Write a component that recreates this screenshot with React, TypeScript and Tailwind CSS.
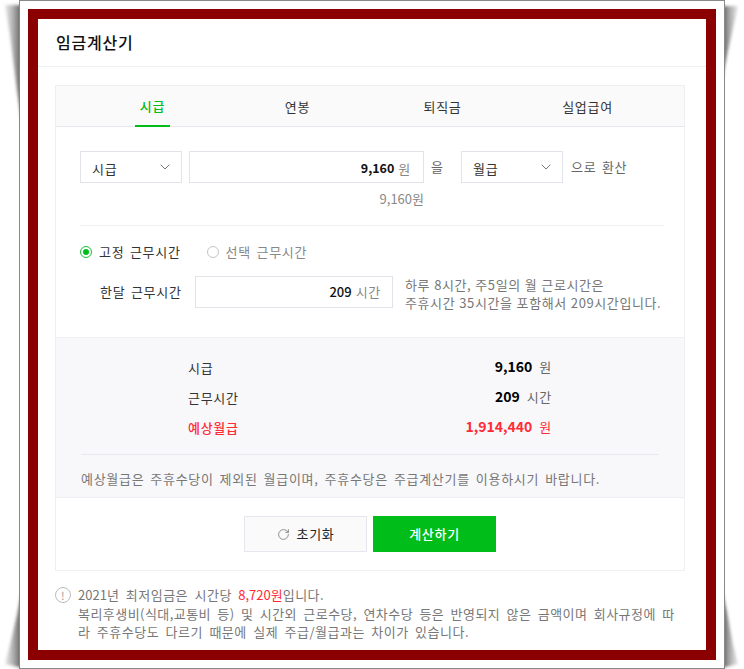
import React from 'react';
import { ChevronDown, RotateCw } from 'lucide-react';

const font = "font-['Noto_Sans_CJK_KR','Noto_Sans',sans-serif]";

const Select = ({ label, className }: { label: string; className: string }) => (
  <div className={`flex h-8 items-center justify-between border border-[#e2e3e8] pl-[11px] pr-2 text-[13px] text-[#333] ${className}`}>
    <span className="mt-[3px]">{label}</span>
    <ChevronDown size={16} strokeWidth={1.5} className="text-[#777]" />
  </div>
);

const Radio = ({ label, on }: { label: string; on?: boolean }) => (
  <label className={`flex items-center gap-[7px] text-[13px] ${on ? 'text-[#333]' : 'text-[#888]'}`}>
    <span className={`flex h-3 w-3 items-center justify-center rounded-full border ${on ? 'border-[#1cc13a]' : 'border-[#c4c4c4]'}`}>
      {on && <span className="h-1.5 w-1.5 rounded-full bg-[#00bd1a]" />}
    </span>
    {label}
  </label>
);

const SummaryRow = ({ label, value, unit, red }: { label: string; value: string; unit: string; red?: boolean }) => (
  <div className={`flex h-[30px] items-center justify-between text-[13px] ${red ? 'text-[#ff2b37]' : 'text-[#333]'}`}>
    <span className={red ? 'font-medium' : ''}>{label}</span>
    <span className="mb-1 flex items-baseline gap-[7px]">
      <b className={`text-[14px] font-bold tracking-normal ${red ? '' : 'text-black'}`}>{value}</b>
      <span className={`text-[13px] ${red ? '' : 'text-[#666]'}`}>{unit}</span>
    </span>
  </div>
);

export default function App() {
  return (
    <div className={`relative h-[669px] w-[744px] overflow-hidden bg-white tracking-[0.7px] [word-spacing:2px] ${font}`}>
      {/* curled page shadows */}
      <svg className="absolute inset-0" width="744" height="669">
        <defs>
          <linearGradient id="l" x1="0" x2="1" y1="0" y2="0">
            <stop offset="0" stopColor="#aaa" stopOpacity="0.3" />
            <stop offset="1" stopColor="#555" />
          </linearGradient>
          <linearGradient id="r" x1="1" x2="0" y1="0" y2="0">
            <stop offset="0" stopColor="#aaa" stopOpacity="0.3" />
            <stop offset="1" stopColor="#555" />
          </linearGradient>
          <filter id="soft" x="-30%" y="-10%" width="160%" height="120%">
            <feGaussianBlur stdDeviation="1.6" />
          </filter>
        </defs>
        <g filter="url(#soft)">
          <polygon points="5,5 22,5 22,125 17,90 10,35" fill="url(#l)" />
          <polygon points="5,664 22,668 22,590 17,615 10,645" fill="url(#l)" />
          <polygon points="738,6 722,6 722,80 727,55 733,28" fill="url(#r)" />
          <polygon points="738,664 722,668 722,590 727,612 733,645" fill="url(#r)" />
        </g>
      </svg>

      <div className="relative ml-[19px] h-[669px] w-[706px] border border-[#888] bg-white p-2">
        <div className="h-[651px] border-[10px] border-[#8b0000] bg-white">
          <h1 className="flex h-[48px] items-center border-b border-[#eeeff2] pb-[2px] pl-[18px] text-base font-medium tracking-[0.8px] text-[#111]">임금계산기</h1>

          <div className="ml-[17px] mt-[18px] w-[630px] border border-[#eeeff2]">
            <div className="flex h-[41px] border-b border-[#e6e7ec] bg-[#fafafa] px-[24px] text-[13px] text-[#333]">
              {['시급', '연봉', '퇴직금', '실업급여'].map((t, i) => (
                <div key={t} className="flex flex-1 justify-center">
                  <span className={`flex h-[41px] items-center px-[5px] ${i === 0 ? 'border-b-2 border-[#00bd1a] font-medium text-[#00bd1a]' : ''}`}>{t}</span>
                </div>
              ))}
            </div>

            <div className="px-6 pt-6">
              <div className="flex items-center text-[13px] text-[#666]">
                <Select label="시급" className="w-[102px]" />
                <div className="ml-[7px] flex h-8 w-[235px] items-center justify-end gap-1 border border-[#e2e3e8] pr-3 pt-[3px]">
                  <b className="text-[12.5px] font-bold tracking-normal text-[#111]">9,160</b>
                  <span className="text-[#888]">원</span>
                </div>
                <span className="ml-[7px] w-[12px]">을</span>
                <Select label="월급" className="ml-[18px] w-[102px]" />
                <span className="ml-2 whitespace-nowrap">으로 환산</span>
              </div>
              <div className="mr-[236px] mt-[6px] text-right text-[13px] leading-[20px] tracking-normal text-[#888]">9,160원</div>

              <div className="mr-[-4px] mt-4 border-t border-[#eeeff2]" />

              <div className="mt-4 flex h-[20px] gap-[26px]">
                <Radio label="고정 근무시간" on />
                <Radio label="선택 근무시간" />
              </div>

              <div className="mt-3 flex items-center pb-[27px]">
                <span className="ml-5 w-[95px] shrink-0 whitespace-nowrap text-[13px] text-[#333]">한달 근무시간</span>
                <div className="flex h-8 w-[198px] shrink-0 items-center justify-end gap-1 border border-[#e2e3e8] pr-[11px] text-[13px]">
                  <span className="font-medium tracking-normal text-[#111]">209</span>
                  <span className="text-[#888]">시간</span>
                </div>
                <p className="-mb-[2px] ml-3 whitespace-nowrap pt-[2px] text-[13px] leading-[18px] tracking-[0.6px] text-[#777] [word-spacing:0.5px]">
                  하루 8시간, 주5일의 월 근로시간은<br />주휴시간 35시간을 포함해서 209시간입니다.
                </p>
              </div>
            </div>

            <div className="border-y border-[#eeeff2] bg-[#f8f8fa] px-[25px] pt-[15px]">
              <div className="ml-[107px] mr-[107px]">
                <SummaryRow label="시급" value="9,160" unit="원" />
                <SummaryRow label="근무시간" value="209" unit="시간" />
                <SummaryRow label="예상월급" value="1,914,440" unit="원" red />
              </div>
              <div className="mt-[11px] flex h-[43px] items-center whitespace-nowrap border-t border-[#e8e9ee] pt-[5px] text-[13px] text-[#777] [word-spacing:2.4px]">
                예상월급은 주휴수당이 제외된 월급이며, 주휴수당은 주급계산기를 이용하시기 바랍니다.
              </div>
            </div>

            <div className="flex h-[72px] items-start justify-center gap-1.5 pt-[18px] text-[13px]">
              <button className="flex h-9 w-[123px] items-center justify-center gap-[7px] border border-[#e6e7ee] bg-[#fafafa] text-[#222]">
                <RotateCw size={13} strokeWidth={1.5} className="text-[#777]" />
                초기화
              </button>
              <button className="h-9 w-[123px] bg-[#00bd1a] font-medium text-white">계산하기</button>
            </div>
          </div>

          <div className="ml-[17px] mt-[15px] flex gap-[7px] whitespace-nowrap text-[13px] leading-[18.5px] tracking-[0.5px] text-[#777] [word-spacing:3px]">
            <span className="mt-[1px] flex h-4 w-4 shrink-0 items-center justify-center rounded-full border border-[#bbb] text-[11px] text-[#999]">!</span>
            <p>
              <span className="tracking-normal">2021</span>년 최저임금은 시간당 <span className="tracking-normal text-[#ff2b37]">8,720원</span>입니다.<br />
              <span className="tracking-[0.45px]">복리후생비(식대,교통비 등) 및 시간외 근로수당, 연차수당 등은 반영되지 않은 금액이며 회사규정에 따</span><br />
              라 주휴수당도 다르기 때문에 실제 주급/월급과는 차이가 있습니다.
            </p>
          </div>
        </div>
      </div>
    </div>
  );
}
